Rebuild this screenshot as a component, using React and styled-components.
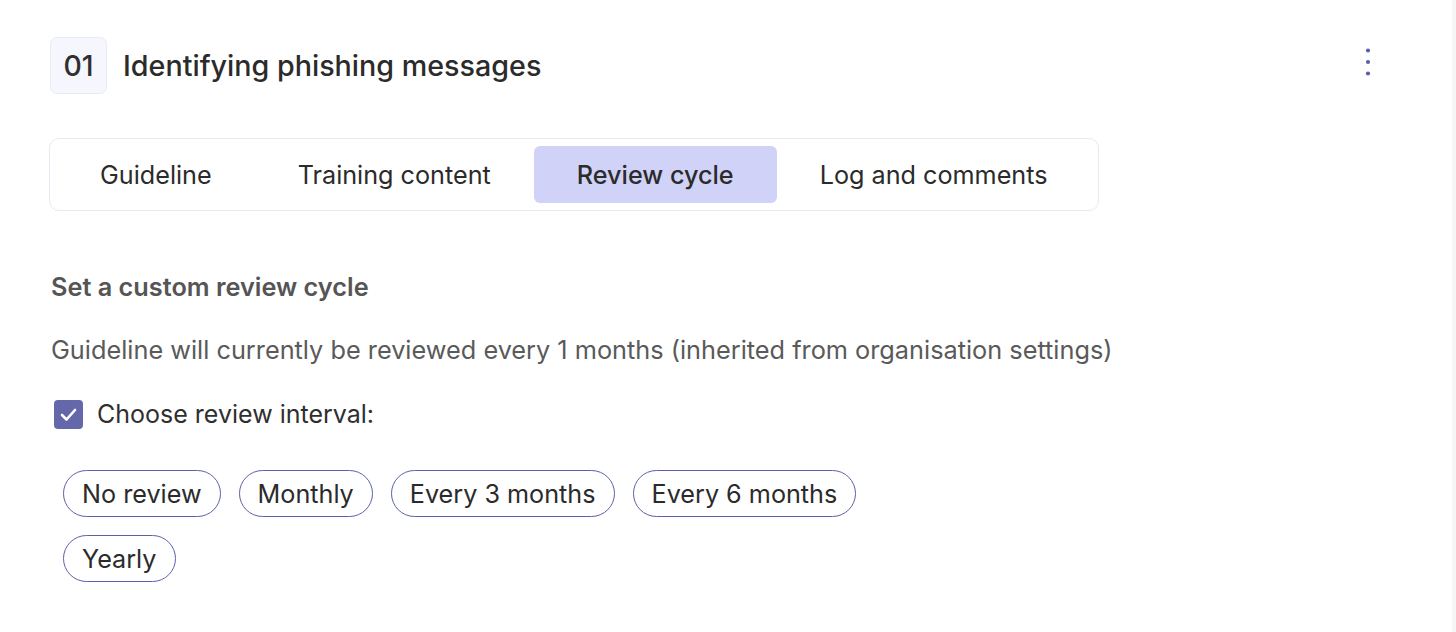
import React, { useState } from "react";
import styled, { createGlobalStyle } from "styled-components";

const Global = createGlobalStyle`
  html, body { margin: 0; padding: 0; background: #ffffff; }
  body { font-family: Inter, "Noto Sans", sans-serif; color: #2f2f2f; }
  * { box-sizing: border-box; }
`;

const Shell = styled.div`
  display: flex;
  min-height: 632px;
`;

const Main = styled.main`
  flex: 1;
  padding: 37px 0 0 50px;
`;

const SideStrip = styled.div`
  width: 4px;
  background: #f6f6f6;
`;

const Header = styled.div`
  display: flex;
  align-items: center;
  justify-content: space-between;
  padding-right: 72px;
`;

const TitleGroup = styled.div`
  display: flex;
  align-items: center;
  gap: 16px;
`;

const NumberBadge = styled.div`
  width: 57px;
  height: 57px;
  border-radius: 7px;
  background: #f5f6fe;
  border: 1px solid #e9eaf6;
  display: flex;
  align-items: center;
  justify-content: center;
  font-size: 28.4px;
  font-weight: 500;
  color: #2f2f2f;
`;

const Title = styled.h1`
  margin: 0;
  font-size: 28.7px;
  font-weight: 500;
  color: #2b2b2b;
  line-height: 34px;
`;

const KebabButton = styled.button`
  width: 24px;
  height: 40px;
  margin-top: -7px;
  border: none;
  background: transparent;
  padding: 0;
  display: flex;
  align-items: center;
  justify-content: center;
  cursor: pointer;
`;

const Tabs = styled.div`
  display: inline-flex;
  margin: 44px 0 0 -1px;
  padding: 7px 7px;
  border: 1px solid #e8e9f4;
  border-radius: 10px;
  background: #fff;
`;

const Tab = styled.button`
  border: none;
  background: ${(p) => (p.$active ? "#d0d3f7" : "transparent")};
  border-radius: 6px;
  height: 57px;
  padding: 0 43px;
  font-family: inherit;
  font-size: 25.2px;
  font-weight: ${(p) => (p.$active ? 500 : 400)};
  color: #2b2b2b;
  cursor: pointer;
`;

const SectionTitle = styled.h2`
  margin: 62px 0 0 1px;
  font-size: 25.3px;
  font-weight: 600;
  color: #555555;
  line-height: 27px;
`;

const Description = styled.p`
  margin: 36px 0 0 1px;
  font-size: 25.3px;
  font-weight: 400;
  color: #5a5a5a;
  line-height: 27px;
`;

const CheckRow = styled.label`
  display: flex;
  align-items: center;
  gap: 14px;
  margin: 36px 0 0 4px;
  font-size: 25px;
  color: #2f2f2f;
  cursor: pointer;
`;

const CheckBox = styled.span`
  width: 29px;
  height: 29px;
  border-radius: 4px;
  background: #6467a9;
  display: flex;
  align-items: center;
  justify-content: center;
`;

const ChipList = styled.div`
  display: flex;
  flex-wrap: wrap;
  gap: 18px;
  max-width: 820px;
  margin: 41px 0 0 13px;
`;

const Chip = styled.button`
  height: 47px;
  padding: 0 18px;
  border: 1px solid #5d60a8;
  border-radius: 24px;
  background: #fff;
  font-family: inherit;
  font-size: 25.2px;
  color: #2b2b2b;
  cursor: pointer;
`;

const tabs = ["Guideline", "Training content", "Review cycle", "Log and comments"];
const intervals = ["No review", "Monthly", "Every 3 months", "Every 6 months", "Yearly"];

export default function App() {
  const [active, setActive] = useState("Review cycle");
  return (
    <>
      <Global />
      <Shell>
        <Main>
          <Header>
            <TitleGroup>
              <NumberBadge>01</NumberBadge>
              <Title>Identifying phishing messages</Title>
            </TitleGroup>
            <KebabButton aria-label="More options">
              <svg width="6" height="30" viewBox="0 0 6 30">
                <circle cx="3" cy="3.5" r="2.1" fill="#5b5ea8" />
                <circle cx="3" cy="15" r="2.1" fill="#5b5ea8" />
                <circle cx="3" cy="26.5" r="2.1" fill="#5b5ea8" />
              </svg>
            </KebabButton>
          </Header>

          <Tabs>
            {tabs.map((t) => (
              <Tab key={t} $active={t === active} onClick={() => setActive(t)}>
                {t}
              </Tab>
            ))}
          </Tabs>

          <SectionTitle>Set a custom review cycle</SectionTitle>
          <Description>
            Guideline will currently be reviewed every 1 months (inherited from organisation settings)
          </Description>
          <CheckRow>
            <CheckBox>
              <svg width="29" height="29" viewBox="0 0 29 29">
                <path d="M8 15 L12.5 19.5 L21 10" fill="none" stroke="#fff" strokeWidth="2.6" strokeLinecap="round" strokeLinejoin="round" />
              </svg>
            </CheckBox>
            Choose review interval:
          </CheckRow>
          <ChipList>
            {intervals.map((i) => (
              <Chip key={i}>{i}</Chip>
            ))}
          </ChipList>
        </Main>
        <SideStrip />
      </Shell>
    </>
  );
}
